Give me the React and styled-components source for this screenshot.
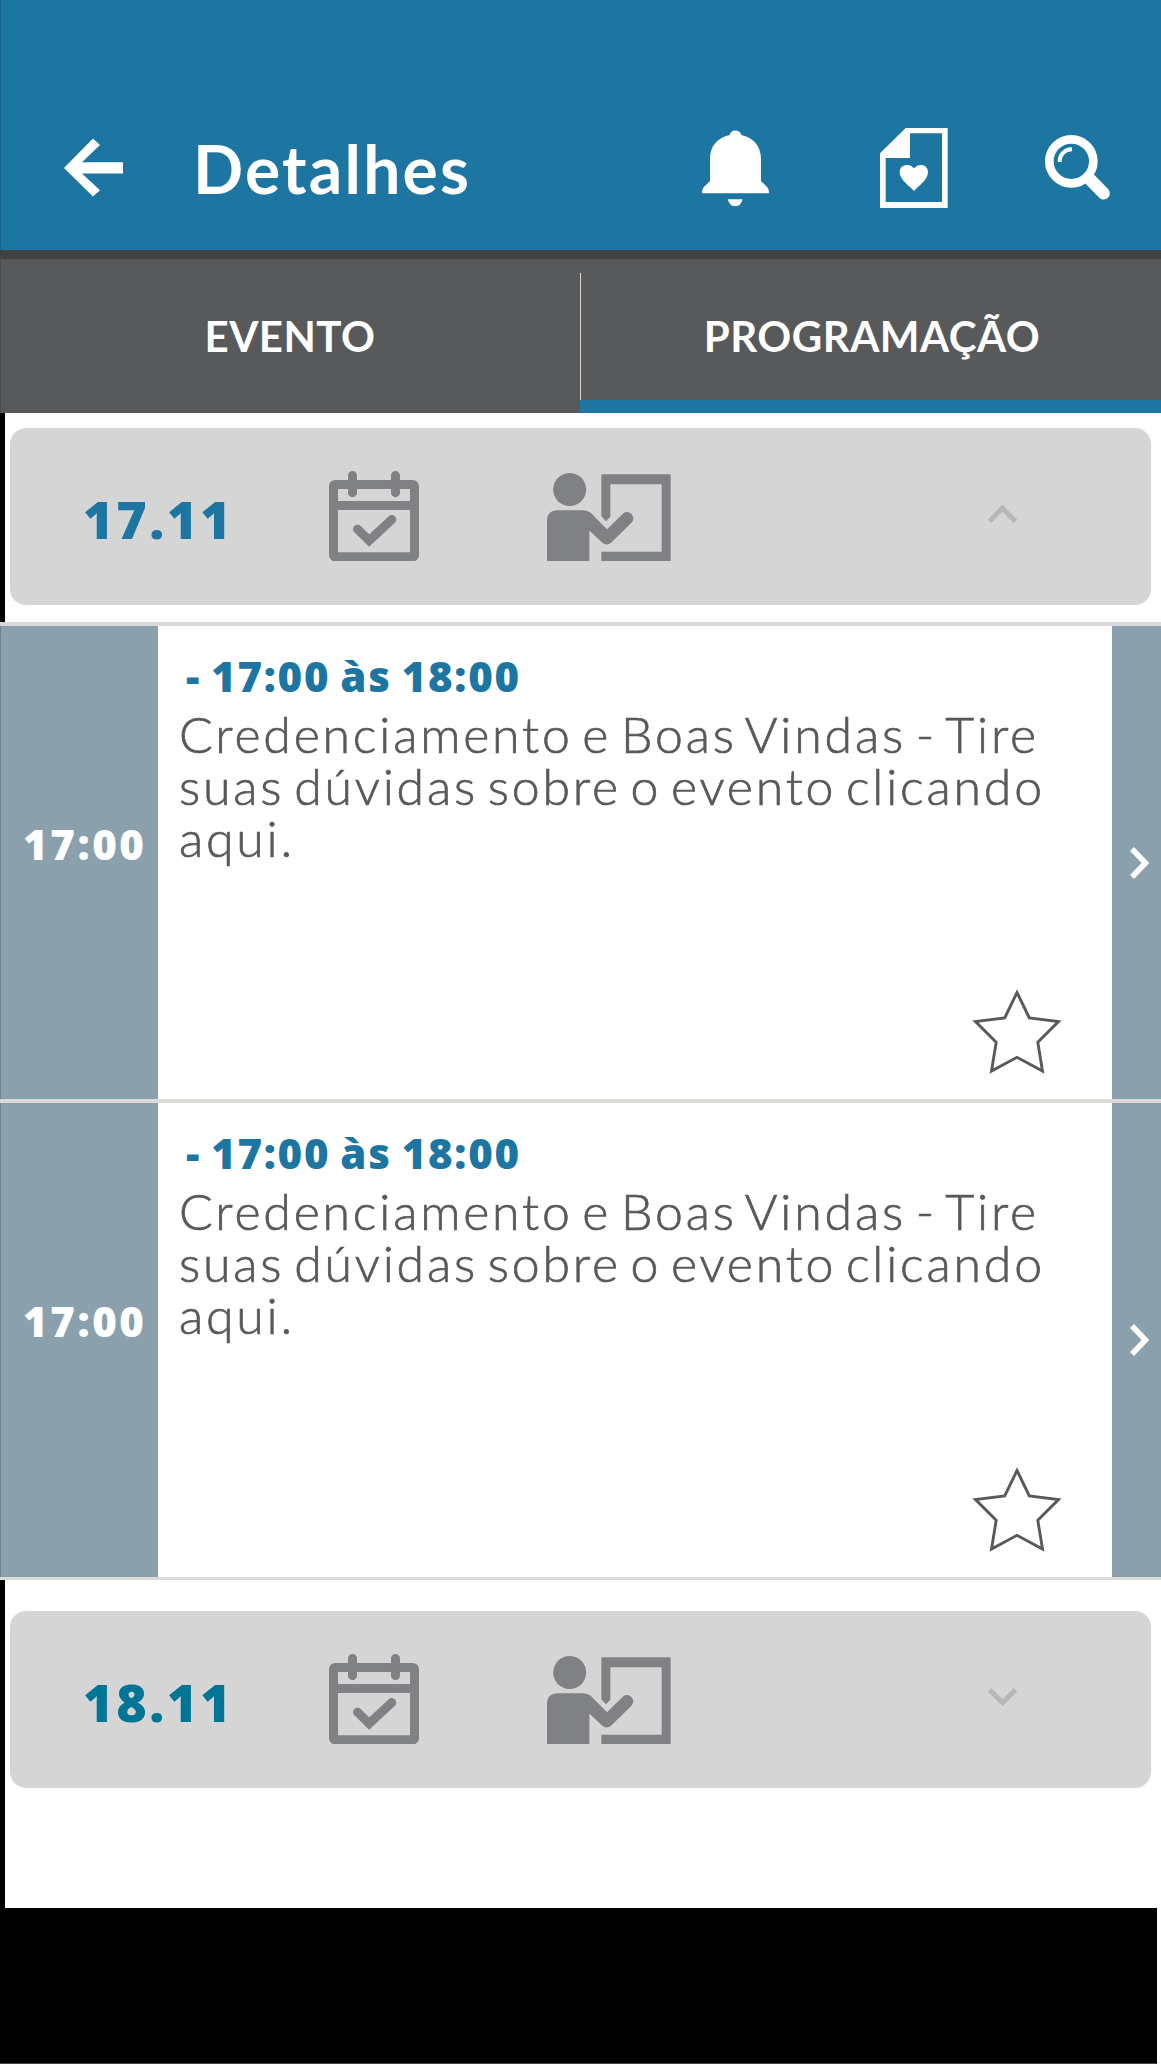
import React, { useState } from 'react'
import styled, { createGlobalStyle } from 'styled-components'

const days = [
    {
        id: `1711`,
        label: `17.11`,
        color: `#1c76a1`,
        sessions: [
            {
                id: 1,
                start: `17:00`,
                period: `- 17:00 às 18:00`,
                title: `Credenciamento e Boas Vindas - Tire suas dúvidas sobre o evento clicando aqui.`
            },
            {
                id: 2,
                start: `17:00`,
                period: `- 17:00 às 18:00`,
                title: `Credenciamento e Boas Vindas - Tire suas dúvidas sobre o evento clicando aqui.`
            }
        ]
    },
    {
        id: `1811`,
        label: `18.11`,
        color: `#007595`,
        sessions: []
    }
]

// Icons
const BackIcon = () => (
    <svg width="59" height="58" viewBox="0 0 59 58" fill="#fff">
        <path d="M0 29L29 -0.500L36 6L18 23.200H59V34.500H18L36 51.200L29 57.500Z" />
    </svg>
)

const BellIcon = () => (
    <svg width="67.3" height="78" viewBox="126 89 202 234" fill="#fff">
        <path d="M209 107A18 18 0 0 1 244 107C280 114 303 141 303 178V245L322 264Q327 270 327 282H126Q126 270 131 264L150 245V178C150 141 173 114 209 107Z" />
        <path d="M203 300H248Q243 321 226 321Q209 321 203 300Z" />
    </svg>
)

const FavoritesIcon = () => (
    <svg width="67.7" height="80" viewBox="661 84 203 240" fill="#fff">
        <path fillRule="evenodd" d="M738 84H864V324H661V160ZM751 100V174H678V306H847V100Z" />
        <path d="M763 273C752 260 720 240 720 216C720 194 749 187 763 205C777 187 805 194 805 216C805 240 774 260 763 273Z" />
    </svg>
)

const SearchIcon = () => (
    <svg width="65" height="65" viewBox="1155 106 195 195" fill="none" stroke="#fff">
        <circle cx="1234" cy="185" r="66" strokeWidth="26" />
        <path d="M1199 187A36 36 0 0 1 1236 149" strokeWidth="12" />
        <path d="M1290 239L1331 281" strokeWidth="37" strokeLinecap="round" />
    </svg>
)

const CalendarIcon = () => (
    <svg width="90" height="90.3" viewBox="87 93 270 271" fill="none" stroke="#808184" strokeWidth="27">
        <rect x="100.5" y="133.5" width="243" height="217" rx="5" />
        <path d="M100 196.500H344" />
        <path d="M157.500 106.500V158M286.500 106.500V158M172.500 267.500L207.500 302L275.500 238.500" strokeLinecap="round" />
    </svg>
)

const SpeakerIcon = () => (
    <svg width="123.700" height="88" viewBox="740 98.500 371 264" fill="#808184">
        <circle cx="808" cy="148" r="49.500" />
        <path d="M740 362.500V243Q740 210 773 210H848Q862 210 871 218L920 267L966 222A18 18 0 0 1 994 247L933 307Q919 319 905 307L867 271V362.500Z" />
        <path d="M903 102H1111V362.500H903V335H1084V132H930V230L917 243L903 228Z" />
    </svg>
)

const StarIcon = () => (
    <svg width="90" height="86" viewBox="972 989 90 86" fill="none" stroke="#58595b" strokeWidth="2.900">
        <path d="M1017 992.500L1029.300 1018L1058.500 1021.500L1037.800 1042.300L1042.500 1071L1017 1057.300L991.500 1071L996.200 1042.300L975.500 1021.500L1004.700 1018Z" />
    </svg>
)

const ToggleIcon = ({ open }) => (
    <svg width="30" height="18" viewBox="0 0 30 18" fill="none" stroke="#b7b7b8" strokeWidth="5">
        <path d={open ? `M1.500 16.200L14.500 3.200L27.500 16.200` : `M1.500 1.800L14.500 14.800L27.500 1.800`} />
    </svg>
)

const NextIcon = () => (
    <svg width="20" height="32" viewBox="0 0 20 32" fill="none" stroke="#fff" strokeWidth="5.500">
        <path d="M2 2L15.500 16L2 30" />
    </svg>
)

const Session = ({ start, period, title }) => (
    <Row>
        <Start>{start}</Start>
        <Details>
            <Period>{period}</Period>
            <Title>{title}</Title>
            <Favorite aria-label={`Favoritar`}><StarIcon /></Favorite>
        </Details>
        <Next aria-label={`Abrir`}><NextIcon /></Next>
    </Row>
)

const App = () => {
    const [tab, setTab] = useState(`programacao`)

    return (
        <Screen>
            <GlobalStyle />
            <Header>
                <Action $space={70}><BackIcon /></Action>
                <Heading>Detalhes</Heading>
                <Action $space={111}><BellIcon /></Action>
                <Action $space={97}><FavoritesIcon /></Action>
                <Action><SearchIcon /></Action>
            </Header>
            <Tabs>
                <Tab $active={tab === `evento`} onClick={() => setTab(`evento`)}>EVENTO</Tab>
                <Tab $active={tab === `programacao`} onClick={() => setTab(`programacao`)}>PROGRAMAÇÃO</Tab>
            </Tabs>
            {days.map(({ id, label, color, sessions }) => (
                <section key={id}>
                    <DayWrap $open={sessions.length > 0}>
                        <Day>
                            <DayLabel $color={color}>{label}</DayLabel>
                            <CalendarSlot><CalendarIcon /></CalendarSlot>
                            <SpeakerSlot><SpeakerIcon /></SpeakerSlot>
                            <ToggleSlot><ToggleIcon open={sessions.length > 0} /></ToggleSlot>
                        </Day>
                    </DayWrap>
                    {sessions.length > 0 && (
                        <Sessions>
                            {sessions.map(item => <Session key={item.id} {...item} />)}
                        </Sessions>
                    )}
                </section>
            ))}
            <Footer />
        </Screen>
    )
}

export default App

// Styled Components
const GlobalStyle = createGlobalStyle`
    *, *::before, *::after {
        box-sizing:border-box;
    }
    body {
        margin:0;
        background:#fff;
        font-family:Lato, "Open Sans", sans-serif;
    }
    button {
        padding:0;
        border:0;
        background:none;
        font:inherit;
    }
    svg {
        display:block;
    }
`
const Screen = styled.main`
    display:flex;
    flex-direction:column;
    width:1161px;
    height:2064px;
    overflow:hidden;
`
const Header = styled.header`
    display:flex;
    align-items:center;
    height:250px;
    padding:85px 51px 0 63px;
    background:#1c76a1;
    border-left:1px solid #17638a;
`
const Heading = styled.h1`
    flex:1;
    margin:0;
    padding-top:2px;
    color:#fff;
    font-size:66px;
    font-weight:700;
    line-height:66px;
    letter-spacing:2.200px;
    white-space:nowrap;
`
const Action = styled.button`
    flex:none;
    margin-right:${props => props.$space || 0}px;
`
const Tabs = styled.nav`
    display:grid;
    grid-template-columns:580px 581px;
    height:163px;
    background:#58595b;
    border-top:9px solid #414142;
    box-shadow:inset 1px 0 #4a4b4d;
`
const Tab = styled.button`
    display:flex;
    align-items:center;
    justify-content:center;
    color:#fff;
    font-size:42px;
    font-weight:700;
    line-height:42px;
    letter-spacing:0.500px;
    border-bottom:13px solid ${props => props.$active ? `#1c76a1` : `transparent`};
    padding-top:12px;
    & + & {
        padding-left:3px;
        background:linear-gradient(#d8d8d9,#d8d8d9) 0 14px / 1px 127px no-repeat;
    }
`
const DayWrap = styled.div`
    padding:${props => props.$open ? `15px 10px 17px 5px` : `31px 10px 120px 5px`};
    border-left:5px solid #000;
`
const Day = styled.div`
    display:grid;
    grid-template-columns:319px 218px 441px 1fr;
    height:177px;
    background:#d5d5d5;
    border-radius:16px;
`
const DayLabel = styled.span`
    padding:56px 0 0 73px;
    color:${props => props.$color};
    font-family:"Open Sans", sans-serif;
    font-size:52px;
    font-weight:800;
    line-height:70px;
    letter-spacing:2.700px;
`
const CalendarSlot = styled.span`
    padding-top:43px;
`
const SpeakerSlot = styled.span`
    padding-top:45px;
`
const ToggleSlot = styled.span`
    padding-top:77px;
`
const Sessions = styled.div`
    border-top:4px solid #dadada;
    border-bottom:3px solid #dedcd8;
`
const Row = styled.article`
    display:grid;
    grid-template-columns:158px 954px 49px;
    height:473px;
    & + & {
        height:478px;
        border-top:4px solid #dcdad6;
    }
`
const Start = styled.div`
    padding:197px 0 0 22px;
    background:#8ba0ad;
    border-left:1px solid #71838e;
    color:#fff;
    font-family:"Open Sans", sans-serif;
    font-size:42px;
    font-weight:800;
    line-height:42px;
    letter-spacing:2.600px;
`
const Details = styled.div`
    display:flex;
    flex-direction:column;
    padding:29px 50px 24px 21px;
`
const Period = styled.div`
    padding-left:7px;
    color:#1c76a1;
    font-family:"Open Sans", sans-serif;
    font-size:42px;
    font-weight:800;
    line-height:42px;
    letter-spacing:1.700px;
    word-spacing:-2.500px;
    white-space:nowrap;
`
const Title = styled.p`
    margin:11px 0 0;
    color:#58595b;
    font-size:50px;
    font-weight:300;
    line-height:52px;
    letter-spacing:2.800px;
    word-spacing:-6.600px;
    -webkit-text-stroke:0.700px #58595b;
`
const Favorite = styled.button`
    margin-top:auto;
    align-self:flex-end;
`
const Next = styled.button`
    display:flex;
    align-items:flex-start;
    padding:220.500px 0 0 18px;
    background:#8ba0ad;
`
const Footer = styled.footer`
    flex:1;
    margin-right:4px;
    background:#000;
    border-bottom:1px solid #444;
`
